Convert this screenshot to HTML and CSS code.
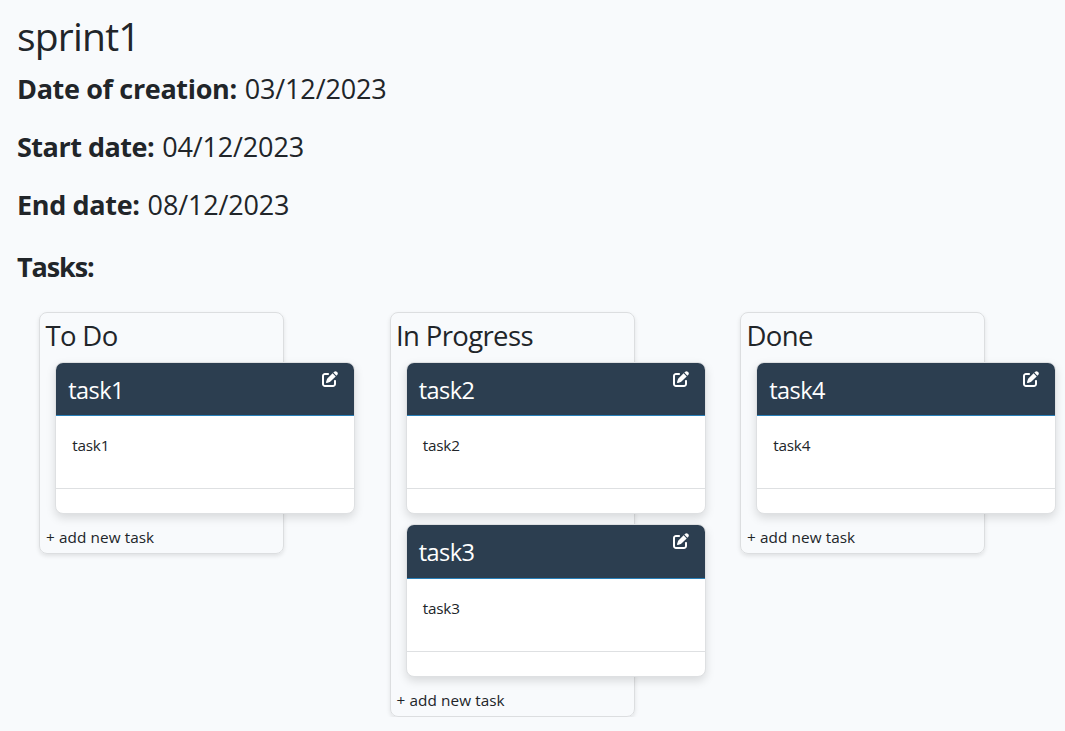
FILE: index.html
```html
<!DOCTYPE html>
<html lang="en">
<head>
<meta charset="utf-8">
<title>sprint1</title>
<link rel="stylesheet" href="styles.css">
</head>
<body>
<svg class="defs" width="0" height="0" aria-hidden="true">
  <symbol id="edit" viewBox="0 0 512 512"><path fill="currentColor" d="M471.6 21.7c-21.9-21.9-57.3-21.9-79.2 0L362.3 51.7l97.9 97.9 30.1-30.1c21.9-21.9 21.9-57.3 0-79.2L471.6 21.7zm-299.2 220c-6.1 6.1-10.8 13.6-13.5 21.9l-29.6 88.8c-2.9 8.6-.6 18.1 5.8 24.6s15.9 8.7 24.6 5.8l88.8-29.6c8.2-2.7 15.7-7.4 21.9-13.5L437.7 172.3 339.7 74.3 172.4 241.7zM96 64C43 64 0 107 0 160V416c0 53 43 96 96 96H352c53 0 96-43 96-96V320c0-17.7-14.3-32-32-32s-32 14.3-32 32v96c0 17.7-14.3 32-32 32H96c-17.7 0-32-14.3-32-32V160c0-17.7 14.3-32 32-32h96c17.7 0 32-14.3 32-32s-14.3-32-32-32H96z"/></symbol>
</svg>
<main class="sprint">
  <h1 class="title">sprint1</h1>
  <p class="meta"><b class="label label-created">Date of creation:</b><span class="date">03/12/2023</span></p>
  <p class="meta"><b class="label label-start">Start date:</b><span class="date">04/12/2023</span></p>
  <p class="meta"><b class="label label-end">End date:</b><span class="date">08/12/2023</span></p>
  <h3 class="tasks-heading">Tasks:</h3>
  <div class="board">
    <section class="column">
      <h3 class="column-title">To Do</h3>
      <article class="card">
        <header class="card-header"><h4 class="card-title">task1</h4><svg class="edit"><use href="#edit"/></svg></header>
        <div class="card-body">task1</div>
        <footer class="card-footer"></footer>
      </article>
      <div class="add">+ add new task</div>
    </section>
    <section class="column">
      <h3 class="column-title">In Progress</h3>
      <article class="card">
        <header class="card-header"><h4 class="card-title">task2</h4><svg class="edit"><use href="#edit"/></svg></header>
        <div class="card-body">task2</div>
        <footer class="card-footer"></footer>
      </article>
      <article class="card">
        <header class="card-header"><h4 class="card-title">task3</h4><svg class="edit"><use href="#edit"/></svg></header>
        <div class="card-body">task3</div>
        <footer class="card-footer"></footer>
      </article>
      <div class="add">+ add new task</div>
    </section>
    <section class="column">
      <h3 class="column-title">Done</h3>
      <article class="card">
        <header class="card-header"><h4 class="card-title">task4</h4><svg class="edit"><use href="#edit"/></svg></header>
        <div class="card-body">task4</div>
        <footer class="card-footer"></footer>
      </article>
      <div class="add">+ add new task</div>
    </section>
  </div>
</main>
</body>
</html>
```
FILE: styles.css
```css
* { box-sizing: border-box; }
body {
  margin: 0;
  background: #f8fafc;
  color: #212529;
  font-family: "Open Sans", "Noto Sans", sans-serif;
  overflow: hidden;
}
h1, h3, h4, p { margin: 0; font-weight: 400; white-space: nowrap; }
.defs { position: absolute; }
.sprint { padding: 12px 0 0 17px; }
.title { font-size: 39px; line-height: 48px; letter-spacing: -0.8px; }
.meta { display: flex; height: 34px; margin-bottom: 24px; font-size: 27px; line-height: 34px; }
.title + .meta { margin-top: 12px; }
.label { font-weight: 700; margin-right: 8px; }
.label-created { letter-spacing: -0.35px; }
.label-start { letter-spacing: -0.5px; }
.label-end { letter-spacing: -0.35px; }
.date { letter-spacing: -0.15px; }
.tasks-heading { margin-top: 28px; font-size: 27px; font-weight: 700; line-height: 34px; letter-spacing: -1.1px; }
.board { display: flex; gap: 105.5px; margin: 28px 0 0 22px; align-items: flex-start; }
.column {
  flex: none;
  width: 245px;
  padding: 6px 0 0 5.4px;
  border: 1px solid #dcdee0;
  border-radius: 8px;
  box-shadow: 0 2px 4px rgba(0, 0, 0, .1);
}
.column-title { font-size: 27.5px; line-height: 34px; letter-spacing: -0.62px; }
.card {
  width: 300px;
  height: 152.4px;
  margin: 9px 0 10px 9.8px;
  display: flex;
  flex-direction: column;
  background: #fff;
  border: 1px solid #dee0e2;
  border-radius: 8px;
  box-shadow: 0 4px 10px rgba(0, 0, 0, .13);
  overflow: hidden;
}
.card + .card { margin-top: 0; }
.card-header {
  display: flex;
  justify-content: space-between;
  height: 53.3px;
  padding: 8px 16px 0 12px;
  background: #2c3e50;
  border-bottom: 1px solid #2980b9;
  color: #fff;
}
.card-title { font-size: 23.5px; line-height: 38.4px; letter-spacing: -0.55px; }
.edit { width: 16px; height: 16px; }
.card-body { flex: 1; padding: 17px 16px; font-size: 15.3px; line-height: 24px; letter-spacing: -0.2px; }
.card-footer { height: 25.2px; border-top: 1px solid #dee0e2; }
.add { height: 29px; padding: 1px 0 0 0.6px; font-size: 15.3px; line-height: 25px; letter-spacing: 0.02px; word-spacing: 0.3px; }
```
